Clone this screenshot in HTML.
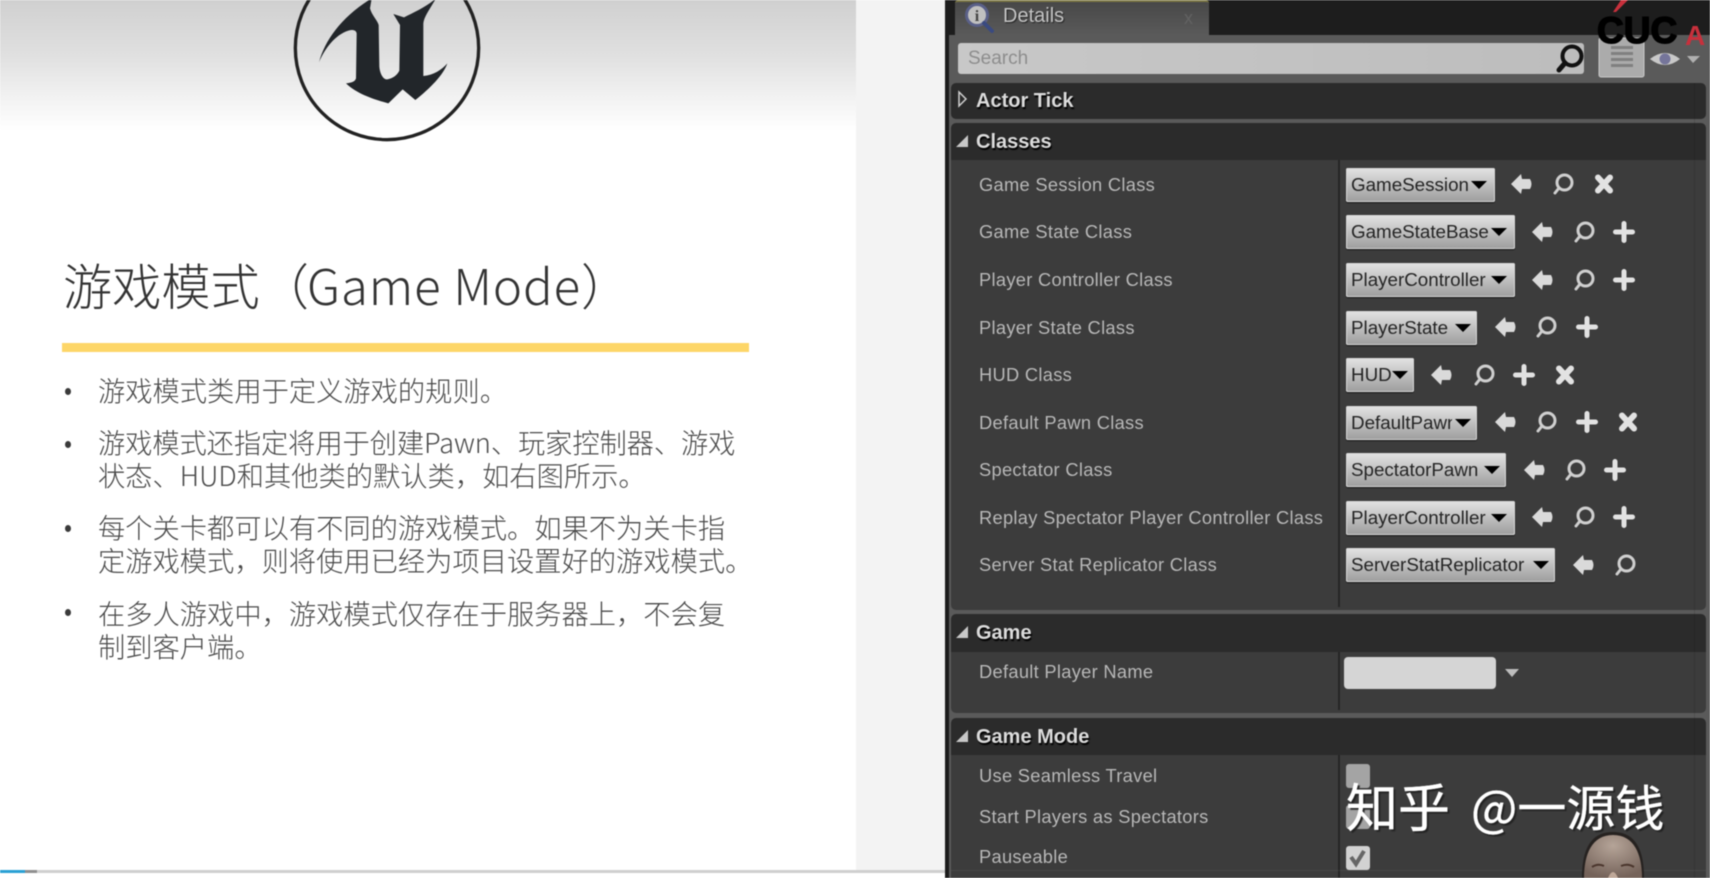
<!DOCTYPE html>
<html lang="zh"><head><meta charset="utf-8"><title>游戏模式</title>
<style>
html,body{margin:0;padding:0;width:1710px;height:878px;overflow:hidden;background:#fff}
*{box-sizing:border-box}
#w{position:absolute;left:0;top:0;width:1710px;height:878px;overflow:hidden;filter:blur(.45px)}
.a{position:absolute;white-space:nowrap}
#slide{position:absolute;left:0;top:0;width:856px;height:878px;background:linear-gradient(#d0d0d0 0,#e0e0e0 55px,#f3f3f3 100px,#fff 130px,#fff 100%)}
#strip{position:absolute;left:856px;top:0;width:89px;height:870px;background:#f3f3f3}
.t{font-family:"Noto Sans CJK SC","Liberation Sans",sans-serif;font-weight:300;color:#4a4a4a;font-size:27.27px;line-height:34px;left:98px}
.b{position:absolute;left:65px;width:6px;height:7px;border-radius:50%;background:#3a3a3a}
#panel{position:absolute;left:945px;top:0;width:765px;height:878px;background:#5a5a5a;border-left:4px solid #1c1c1c}
.h{position:absolute;left:951px;width:755px;background:#2b2b2b;border-radius:5px 5px 0 0}
.bd{position:absolute;left:951px;width:755px;background:#3c3c3c;border-radius:0 0 5px 5px}
.ht{font:bold 20px "Liberation Sans",sans-serif;color:#dcdcdc;text-shadow:1px 2px 1px #000;left:976px;line-height:24px}
.l{font:18.3px "Liberation Sans",sans-serif;letter-spacing:.3px;color:#b8b8b8;left:979px;line-height:22px}
.v{position:absolute;left:1338px;width:2px;background:#262626}
.dd{position:absolute;left:1346px;height:34px;border-radius:2px;background:linear-gradient(#e4e4e4,#9c9c9c);box-shadow:inset 0 0 0 1px #d8d8d8,0 1px 1px #1a1a1a;overflow:hidden}
.dd span{position:absolute;left:5px;top:6px;font:18.8px/22px "Liberation Sans",sans-serif;color:#242424;overflow:hidden;white-space:nowrap}
.dd i{position:absolute;top:13px;width:0;height:0;border-left:8px solid transparent;border-right:8px solid transparent;border-top:8px solid #000}
.cb{position:absolute;left:1346px;width:24px;height:24px;border-radius:3px}
.wm{color:#fff;-webkit-text-stroke:.4px #fff;text-shadow:2px 2px 1px #222;font-family:'Noto Sans CJK SC','Liberation Sans',sans-serif}
</style></head><body><div id="w">
<div id="slide"></div><div id="strip"></div>

<svg class="a" style="left:270px;top:0" width="220" height="150" viewBox="0 0 660 450">
<circle cx="351" cy="144" r="275" fill="none" stroke="#222" stroke-width="10"/>
<path fill="#22262a" d="M147 187C165 120 215 50 305 -5L300 25C305 45 322 60 326 75L328 200C330 225 342 240 352 238C368 236 382 225 388 212L390 75L370 42L402 52C430 38 470 20 498 -5C478 30 462 50 460 70L460 228C490 225 515 210 532 190C520 225 480 265 436 300L398 268L355 310C320 300 265 285 228 250C245 248 255 245 258 235L260 100C258 90 248 88 235 92C195 105 165 145 147 187Z"/>
</svg>

<div class="a" style="left:63px;top:252px;font:300 49.2px/66px 'Noto Sans CJK SC','Liberation Sans',sans-serif;color:#333"><span style="margin-right:-2px">游戏模式（</span><span style="letter-spacing:.9px">Game Mode</span>）</div>
<div class="a" style="left:62px;top:343px;width:687px;height:9px;background:#fdd668"></div>

<div class="b" style="top:388px"></div>
<div class="a t" style="top:372px">游戏模式类用于定义游戏的规则。</div>
<div class="b" style="top:441px"></div>
<div class="a t" style="top:424px;letter-spacing:-.1px">游戏模式还指定将用于创建Pawn、玩家控制器、游戏</div>
<div class="a t" style="top:457px">状态、HUD和其他类的默认类，如右图所示。</div>
<div class="b" style="top:525px"></div>
<div class="a t" style="top:509px">每个关卡都可以有不同的游戏模式。如果不为关卡指</div>
<div class="a t" style="top:542px">定游戏模式，则将使用已经为项目设置好的游戏模式。</div>
<div class="b" style="top:609px"></div>
<div class="a t" style="top:595px">在多人游戏中，游戏模式仅存在于服务器上，不会复</div>
<div class="a t" style="top:628px">制到客户端。</div>

<div class="a" style="left:0;top:870px;width:945px;height:3px;background:#cfcfcf"></div>
<div class="a" style="left:0;top:870px;width:25px;height:3px;background:#2aa0d4"></div>
<div class="a" style="left:25px;top:870px;width:12px;height:3px;background:#8f8f8f"></div>

<div id="panel"></div>
<div class="a" style="left:945px;top:0;width:765px;height:35px;background:#1d1d1d"></div>
<div class="a" style="left:955px;top:0;width:254px;height:35px;background:linear-gradient(#484848,#5a5a5a);border-radius:3px 3px 0 0;border-top:2px solid #7d7845"></div>
<svg class="a" style="left:961px;top:1px" width="36" height="36" viewBox="0 0 36 36">
<circle cx="16" cy="14" r="10.5" fill="#c0c0c0" stroke="#5a6088" stroke-width="3"/>
<path d="M23 22L31 30" stroke="#3a4a80" stroke-width="4" stroke-linecap="round"/>
<text x="16" y="20" text-anchor="middle" font-family="Liberation Serif,serif" font-weight="bold" font-size="16" fill="#444">i</text>
</svg>
<div class="a" style="left:1003px;top:5px;font:20px/22px 'Liberation Sans',sans-serif;color:#c4c4c4;text-shadow:1px 1px 1px #222">Details</div>
<div class="a" style="left:1184px;top:7px;font:18px/22px 'Liberation Sans',sans-serif;color:#626262">x</div>

<div class="a" style="left:958px;top:43px;width:626px;height:31px;border-radius:3px;background:linear-gradient(90deg,#c8c8c8,#bdbdbd)"></div>
<div class="a" style="left:968px;top:48px;font:19px/22px 'Liberation Sans',sans-serif;color:#8d8d8d">Search</div>

<div class="h" style="top:83px;height:36px;border-radius:5px"></div>
<div class="h" style="top:123px;height:37px"></div>
<div class="bd" style="top:160px;height:450px"></div>
<div class="h" style="top:614px;height:38px"></div>
<div class="bd" style="top:652px;height:61px"></div>
<div class="h" style="top:718px;height:37px"></div>
<div class="bd" style="top:755px;height:123px;border-radius:0"></div>
<div class="v" style="top:160px;height:447px"></div>
<div class="v" style="top:652px;height:58px"></div>
<div class="v" style="top:755px;height:123px"></div>
<div class="a" style="left:1694px;top:83px;width:1px;height:795px;background:rgba(0,0,0,.1)"></div>
<div class="a" style="left:951px;top:870px;width:755px;height:1px;background:rgba(255,255,255,.06)"></div>

<div class="a ht" style="top:89px">Actor Tick</div>
<div class="a ht" style="top:130px">Classes</div>
<div class="a ht" style="top:621px">Game</div>
<div class="a ht" style="top:725px">Game Mode</div>

<div class="a l" style="top:174px">Game Session Class</div>
<div class="a l" style="top:221px">Game State Class</div>
<div class="a l" style="top:269px">Player Controller Class</div>
<div class="a l" style="top:317px">Player State Class</div>
<div class="a l" style="top:364px">HUD Class</div>
<div class="a l" style="top:412px">Default Pawn Class</div>
<div class="a l" style="top:459px">Spectator Class</div>
<div class="a l" style="top:507px">Replay Spectator Player Controller Class</div>
<div class="a l" style="top:554px">Server Stat Replicator Class</div>
<div class="a l" style="top:661px">Default Player Name</div>
<div class="a l" style="top:765px">Use Seamless Travel</div>
<div class="a l" style="top:806px">Start Players as Spectators</div>
<div class="a l" style="top:846px">Pauseable</div>

<div class="dd" style="top:168px;width:149px"><span>GameSession</span><i style="left:125px"></i></div>
<div class="dd" style="top:215px;width:169px"><span>GameStateBase</span><i style="left:145px"></i></div>
<div class="dd" style="top:263px;width:169px"><span>PlayerController</span><i style="left:145px"></i></div>
<div class="dd" style="top:311px;width:131px"><span>PlayerState</span><i style="left:109px"></i></div>
<div class="dd" style="top:358px;width:68px"><span>HUD</span><i style="left:46px"></i></div>
<div class="dd" style="top:406px;width:131px"><span style="width:101px">DefaultPawn</span><i style="left:109px"></i></div>
<div class="dd" style="top:453px;width:160px"><span>SpectatorPawn</span><i style="left:138px"></i></div>
<div class="dd" style="top:501px;width:169px"><span>PlayerController</span><i style="left:145px"></i></div>
<div class="dd" style="top:548px;width:209px"><span>ServerStatReplicator</span><i style="left:187px"></i></div>

<div class="a" style="left:1344px;top:657px;width:152px;height:32px;border-radius:4px;background:#d5d5d5"></div>
<div class="cb" style="top:764px;background:#a4a4a4"></div>
<div class="cb" style="top:805px;background:#a4a4a4"></div>
<div class="cb" style="top:846px;background:#d2d2d2"></div>

<svg class="a" style="left:0;top:0" width="1710" height="878" viewBox="0 0 1710 878">
<defs>
<radialGradient id="sk" cx="50%" cy="25%" r="75%"><stop offset="0" stop-color="#b5a498"/><stop offset="1" stop-color="#75635a"/></radialGradient>
<path id="ar" d="M-11 0L-1 -10L0 -5L8 -5Q11 0 8 5L0 5L-1 10Z" fill="#dadada"/>
<g id="mg" fill="none" stroke="#cfcfcf" stroke-width="3" stroke-linecap="round"><circle cx="1.5" cy="-1.5" r="7.5"/><path d="M-4 4L-8 9"/></g>
<path id="pl" d="M0 -8.5V8.5M-8.5 0H8.5" stroke="#e2e2e2" stroke-width="5" stroke-linecap="round"/>
<path id="xx" d="M-6 -6.5L6 6.5M6 -6.5L-6 6.5" stroke="#e2e2e2" stroke-width="6" stroke-linecap="round"/>
</defs>
<use href="#ar" x="1522" y="184"/><use href="#mg" x="1563" y="184"/><use href="#xx" x="1604" y="184"/>
<use href="#ar" x="1543" y="232"/><use href="#mg" x="1584" y="232"/><use href="#pl" x="1624" y="232"/>
<use href="#ar" x="1543" y="280"/><use href="#mg" x="1584" y="280"/><use href="#pl" x="1624" y="280"/>
<use href="#ar" x="1506" y="327"/><use href="#mg" x="1546" y="327"/><use href="#pl" x="1587" y="327"/>
<use href="#ar" x="1442" y="375"/><use href="#mg" x="1484" y="375"/><use href="#pl" x="1524" y="375"/><use href="#xx" x="1565" y="375"/>
<use href="#ar" x="1506" y="422"/><use href="#mg" x="1546" y="422"/><use href="#pl" x="1587" y="422"/><use href="#xx" x="1628" y="422"/>
<use href="#ar" x="1535" y="470"/><use href="#mg" x="1575" y="470"/><use href="#pl" x="1615" y="470"/>
<use href="#ar" x="1543" y="517"/><use href="#mg" x="1584" y="517"/><use href="#pl" x="1624" y="517"/>
<use href="#ar" x="1584" y="565"/><use href="#mg" x="1625" y="565"/>

<path d="M1505 669H1519L1512 677Z" fill="#bdbdbd"/>
<path d="M959 92L966 99L959 106Z" fill="none" stroke="#cfcfcf" stroke-width="1.5"/>
<path d="M956 147L968 135V147Z" fill="#c8c8c8"/>
<path d="M956 638L968 626V638Z" fill="#c8c8c8"/>
<path d="M956 742L968 730V742Z" fill="#c8c8c8"/>
<path d="M1351 857L1356 864L1364 851" fill="none" stroke="#666" stroke-width="4"/>

<circle cx="1572" cy="56" r="9.5" fill="none" stroke="#111" stroke-width="4"/>
<path d="M1565 63L1559 70" stroke="#111" stroke-width="5" stroke-linecap="round"/>

<rect x="1599" y="38" width="45" height="39" rx="2" fill="#ababab" stroke="#c8c8c8"/>
<g fill="#808080"><rect x="1611" y="46" width="22" height="3"/><rect x="1611" y="52" width="22" height="3"/><rect x="1611" y="58" width="22" height="3"/><rect x="1611" y="64" width="22" height="3"/></g>
<path d="M1650 59Q1665 47 1680 59Q1665 71 1650 59Z" fill="#c8c8c8"/>
<circle cx="1665" cy="59" r="5.5" fill="#75759a"/>
<path d="M1687 56H1700L1693 63Z" fill="#b0b0b0"/>

<path d="M1613 12L1621 0H1628L1616 12Z" fill="#c8303c"/>

<path d="M1582 878C1582 852 1589 832 1613 832C1637 832 1644 852 1644 878Z" fill="#262220"/>
<path d="M1584 878C1584 854 1592 835 1613 835C1634 835 1642 854 1642 878Z" fill="url(#sk)"/>
<path d="M1592 867Q1598 863 1604 866M1621 866Q1628 863 1634 867" fill="none" stroke="#4a352c" stroke-width="2"/>
<path d="M1608 878Q1613 866 1618 878Z" fill="#bfa899"/>
</svg>

<div class="a" style="left:1597px;top:10px;font:bold 37px/42px 'Liberation Sans',sans-serif;color:#000;-webkit-text-stroke:1.5px #000">CUC</div>
<div class="a" style="left:1685px;top:21px;font:bold 28px/30px 'Liberation Sans',sans-serif;color:#c8303c">A</div>

<div class="a wm" style="left:1346px;top:775px;font-size:52px;line-height:60px">知乎</div>
<div class="a wm" style="left:1471px;top:778px;font-size:49px;line-height:56px">@一源钱</div>
</div></body></html>
